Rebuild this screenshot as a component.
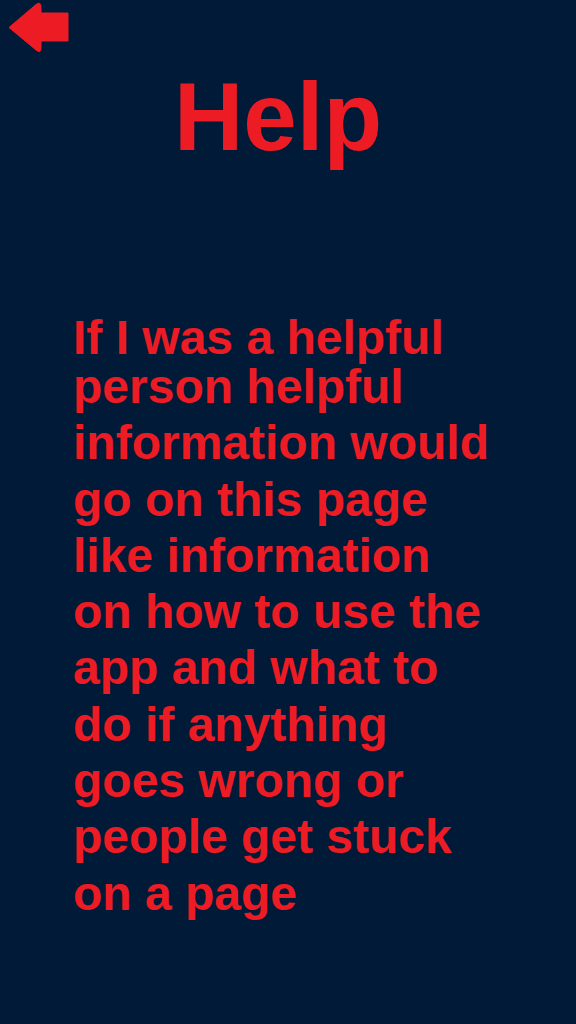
import React from "react";

const lines = [
  "person helpful",
  "information would",
  "go on this page",
  "like information",
  "on how to use the",
  "app and what to",
  "do if anything",
  "goes wrong or",
  "people get stuck",
  "on a page",
];

export default function App() {
  return (
    <div
      className="w-[576px] h-[1024px] bg-[#011a38] text-[#ed1c24] font-bold overflow-hidden"
      style={{ fontFamily: '"Liberation Sans", Arial, sans-serif' }}
    >
      <div className="h-[56px]">
        <svg width="76" height="56" viewBox="0 0 76 56">
          <path
            d="M9 27.5 L36 4.5 Q41 1 41 7 L41 13 L68 13 L68 41 L41 41 L41 48 Q41 54 36 50 Z"
            fill="#ed1c24"
            stroke="#ed1c24"
            strokeWidth="1"
            strokeLinejoin="round"
          />
        </svg>
      </div>
      <h1 className="mt-[13px] pl-[174px] text-[96px] leading-[96px]">Help</h1>
      <div className="mt-[152px] pl-[73px]">
        <div className="text-[48px] leading-[42px]">If I was a helpful</div>
        <div className="text-[48px] leading-[56.3px]">
          {lines.map((l) => (
            <div key={l}>{l}</div>
          ))}
        </div>
      </div>
    </div>
  );
}
